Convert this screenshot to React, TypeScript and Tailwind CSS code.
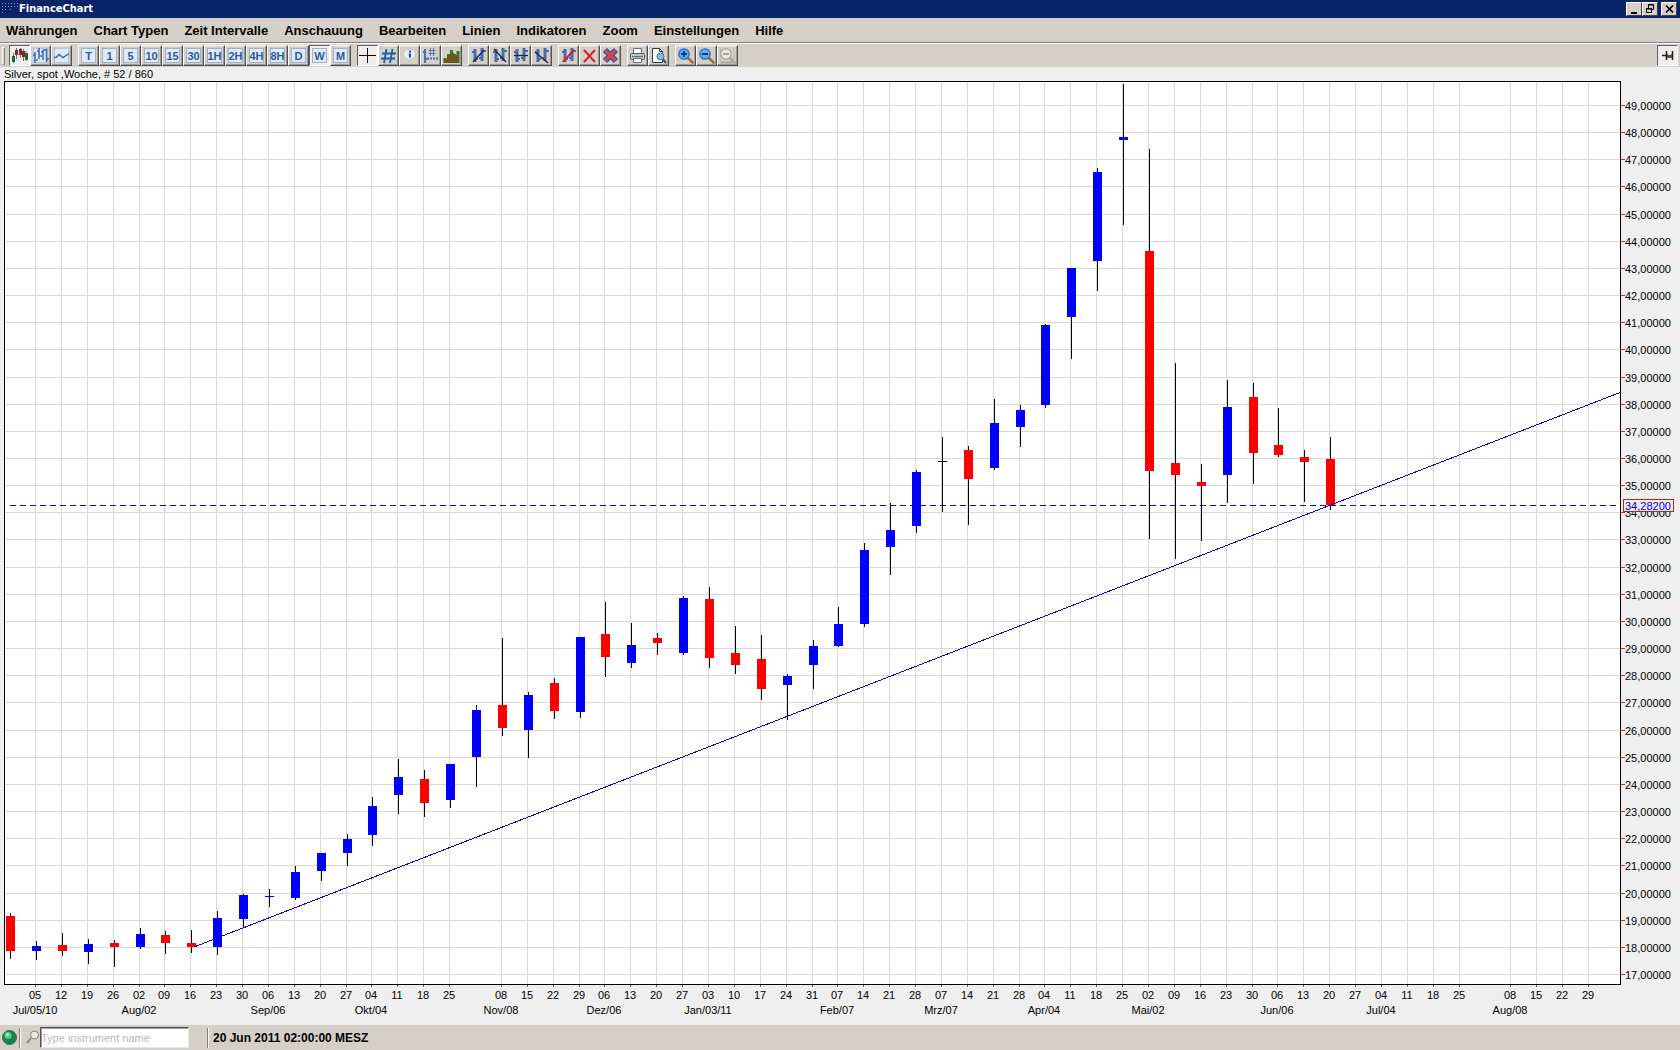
import React from 'react';

const MENUS = [
  'Währungen',
  'Chart Typen',
  'Zeit Intervalle',
  'Anschauung',
  'Bearbeiten',
  'Linien',
  'Indikatoren',
  'Zoom',
  'Einstellungen',
  'Hilfe',
];

const INTERVALS = ['T', '1', '5', '10', '15', '30', '1H', '2H', '4H', '8H', 'D', 'W', 'M'];

type Candle = [high: number, top: number, bottom: number, low: number, color: 'b' | 'r' | 'k'];

// One entry per week, values in chart units (y axis pointing down)
const CANDLES: Candle[] = [
  [913, 916, 951, 959, 'r'],
  [941, 946, 951, 960, 'b'],
  [933, 945, 951, 956, 'r'],
  [939, 944, 952, 964, 'b'],
  [940, 943, 947, 967, 'r'],
  [928, 934, 947, 949, 'b'],
  [931, 935, 943, 954, 'r'],
  [930, 943, 947, 953, 'r'],
  [911, 918, 947, 955, 'b'],
  [894, 895, 919, 928, 'b'],
  [889, 896, 897, 907, 'b'],
  [866, 872, 898, 900, 'b'],
  [853, 853, 871, 881, 'b'],
  [834, 839, 853, 866, 'b'],
  [797, 806, 835, 846, 'b'],
  [759, 777, 795, 814, 'b'],
  [770, 779, 803, 817, 'r'],
  [764, 764, 800, 808, 'b'],
  [705, 710, 757, 787, 'b'],
  [638, 705, 728, 736, 'r'],
  [692, 695, 730, 758, 'b'],
  [678, 683, 711, 719, 'r'],
  [637, 637, 712, 718, 'b'],
  [602, 634, 657, 677, 'r'],
  [623, 645, 663, 668, 'b'],
  [633, 638, 643, 655, 'r'],
  [596, 598, 653, 655, 'b'],
  [587, 599, 658, 668, 'r'],
  [626, 653, 665, 674, 'r'],
  [635, 659, 689, 700, 'r'],
  [674, 676, 685, 720, 'b'],
  [640, 646, 665, 689, 'b'],
  [607, 624, 646, 647, 'b'],
  [543, 550, 624, 627, 'b'],
  [503, 530, 547, 575, 'b'],
  [470, 472, 526, 533, 'b'],
  [437, 461, 462, 512, 'k'],
  [446, 450, 479, 525, 'r'],
  [399, 423, 468, 470, 'b'],
  [405, 410, 427, 447, 'b'],
  [324, 325, 405, 408, 'b'],
  [268, 268, 317, 359, 'b'],
  [168, 172, 261, 291, 'b'],
  [84, 137, 140, 225, 'b'],
  [149, 251, 471, 539, 'r'],
  [363, 463, 475, 559, 'r'],
  [464, 482, 486, 541, 'r'],
  [380, 407, 475, 503, 'b'],
  [383, 397, 453, 484, 'r'],
  [408, 445, 455, 457, 'r'],
  [450, 457, 462, 502, 'r'],
  [437, 459, 505, 510, 'r'],
];

const COLORS = { b: '#0000ff', r: '#ff0000', k: '#000000' };

// Empty strings are weeks without a grid line
const DAYS = [
  '05', '12', '19', '26', '02', '09', '16', '23', '30', '06', '13', '20', '27', '04', '11', '18', '25', '',
  '08', '15', '22', '29', '06', '13', '20', '27', '03', '10', '17', '24', '31', '07', '14', '21', '28',
  '07', '14', '21', '28', '04', '11', '18', '25', '02', '09', '16', '23', '30', '06', '13', '20', '27',
  '04', '11', '18', '25', '', '08', '15', '22', '29',
];

const MONTHS: Record<number, string> = {
  1: 'Jul/05/10',
  5: 'Aug/02',
  10: 'Sep/06',
  14: 'Okt/04',
  19: 'Nov/08',
  23: 'Dez/06',
  27: 'Jan/03/11',
  32: 'Feb/07',
  36: 'Mrz/07',
  40: 'Apr/04',
  44: 'Mai/02',
  49: 'Jun/06',
  53: 'Jul/04',
  58: 'Aug/08',
};

const PRICES = Array.from({ length: 33 }, (_, i) => 49 - i);

const weekX = (i: number) => Math.round(6.13 + 25.883 * i);
const priceY = (price: number) => Math.round(105 + (49 - price) * 27.156);

interface ToolButtonProps {
  label: string;
  active?: boolean;
  children: React.ReactNode;
}

const ToolButton: React.FC<ToolButtonProps> = ({ label, active, children }) => (
  <button
    title={label}
    aria-label={label}
    aria-pressed={active}
    className={
      'flex size-[21px] shrink-0 items-center justify-center border ' +
      (active
        ? 'border-t-[#606060] border-l-[#606060] border-r-white border-b-white bg-[#efeeec]'
        : 'border-t-white border-l-white border-r-[#505050] border-b-[#505050] bg-[#d4d0c8] shadow-[inset_-1px_-1px_0_#a09c94]')
    }
  >
    {children}
  </button>
);

const Icon: React.FC<{ children: React.ReactNode }> = ({ children }) => (
  <svg width="17" height="17" viewBox="0 0 17 17" fill="none">
    {children}
  </svg>
);

// Pair of blue bars shared by the line drawing tools
const Bars = () => (
  <g stroke="#4a68ac" strokeWidth="3">
    <path d="M5 2v13M12 1v13" />
    <path d="M2 5h3M5 12h3M9 11h3M12 4h4" strokeWidth="2" />
  </g>
);

const Tile = () => <rect x="1.5" y="1.5" width="14" height="14" fill="#dfebfb" stroke="#b3c6e2" />;

const Magnifier: React.FC<{ sign: string; off?: boolean }> = ({ sign, off }) => (
  <Icon>
    {off && <path d="M1.5 1v14.5H15V1" stroke="#c0bcb4" />}
    {off && <path d="M2 15.5h13" stroke="#aaa69e" strokeWidth="2" />}
    <path d="M10.5 10.5l5 5" stroke={off ? '#aaa69e' : '#a8682c'} strokeWidth="2.5" strokeLinecap="round" />
    <circle cx="7" cy="7" r="5.2" fill={off ? '#eceae6' : '#5fb0f2'} stroke={off ? '#a8a49c' : '#1f6fc0'} strokeWidth="1.3" />
    <path d={sign} stroke={off ? '#a8a49c' : '#0a3278'} strokeWidth="2" />
  </Icon>
);

const WindowButton: React.FC<{ label: string; children: React.ReactNode }> = ({ label, children }) => (
  <button
    aria-label={label}
    className="flex h-[14px] w-4 items-center justify-center border border-t-white border-l-white border-r-[#404040] border-b-[#404040] bg-[#d4d0c8]"
  >
    <svg width="13" height="12" viewBox="0 0 13 12" fill="none">
      {children}
    </svg>
  </button>
);

const TitleBar = () => (
  <header className="flex h-[18px] items-center bg-[#0a246a] pr-[3px] pl-[2px]">
    <svg width="16" height="16" viewBox="0 0 16 16" stroke="#8295c4" strokeDasharray="1 2">
      <path d="M0 2.5h16M0 5.5h16M0 8.5h5M8 8.5h3M0 11.5h2" />
    </svg>
    <h1 className="ml-px flex-1 font-['DejaVu_Sans_Condensed','DejaVu_Sans',sans-serif] text-[11px] font-bold text-white">
      FinanceChart
    </h1>
    <div className="flex">
      <WindowButton label="Minimieren">
        <path d="M3 9h6v2H3z" fill="#000" />
      </WindowButton>
      <WindowButton label="Wiederherstellen">
        <path d="M4.5 5V1.5h5v5H8M4 2h6M2.5 5.5h5v4h-5zM2 6h6" stroke="#000" />
      </WindowButton>
      <div className="w-[3px]" />
      <WindowButton label="Schließen">
        <path d="M3 2.5l7 7M10 2.5l-7 7" stroke="#000" strokeWidth="1.7" />
      </WindowButton>
    </div>
  </header>
);

const MenuBar = () => (
  <nav className="flex h-[25px] items-center gap-4 border-b border-[#808080] pt-[2px] pl-[6px]">
    {MENUS.map((menu) => (
      <button key={menu} className="text-[13px] leading-4 font-bold whitespace-nowrap">
        {menu}
      </button>
    ))}
  </nav>
);

const Toolbar = () => (
  <div className="flex h-6 items-start gap-[6px] border-t border-white pt-px pr-[2px] pl-[2px]">
    <div className="-mr-[2px] h-[18px] w-[3px] self-center border border-t-white border-l-white border-r-[#808080] border-b-[#808080]" />
    <div className="flex">
      <ToolButton label="Kerzen" active>
        <Icon>
          <path d="M2.5 6v10M5.5 1v11M9.5 1v10M12.5 2v12M15 4v10" stroke="#6c7480" />
          <path d="M1 9h3v6H1zM14 6h3v7h-3z" fill="#1c6a2c" />
          <path d="M4 3h3v5H4zM8 2h3v6H8zM11 4h3v6h-3z" fill="#8c2430" />
        </Icon>
      </ToolButton>
      <ToolButton label="Balken">
        <Icon>
          <Tile />
          <path
            d="M3 5v11M1 8h2M3 13h3M7 1v11M5 4h2M7 9h3M11 3v10M9 5h2M11 3h3M14.5 2v13M14 12h3"
            stroke="#3c68b0"
            strokeWidth="1.5"
          />
        </Icon>
      </ToolButton>
      <ToolButton label="Linie">
        <Icon>
          <Tile />
          <path d="M1 10.5h2l3-3 4 3 6-4" stroke="#456a9c" strokeWidth="1.5" />
        </Icon>
      </ToolButton>
    </div>

    <div className="flex">
      {INTERVALS.map((interval) => (
        <ToolButton key={interval} label={`Intervall ${interval}`} active={interval === 'W'}>
          <span className="flex size-[15px] items-center justify-center border border-[#9db2d0] bg-[#dfebfb] text-[11px] leading-3 font-black text-[#34598c]">
            {interval}
          </span>
        </ToolButton>
      ))}
    </div>

    <div className="flex">
      <ToolButton label="Fadenkreuz" active>
        <Icon>
          <path d="M0 8.5h17M8.5 1v15" stroke="#000" />
        </Icon>
      </ToolButton>
      <ToolButton label="Gitter">
        <Icon>
          <path d="M6.5 2L4 16M12.5 2L10 16M2 6.5h14M1 11.5h14" stroke="#1560a8" strokeWidth="1.8" />
        </Icon>
      </ToolButton>
      <ToolButton label="Information">
        <Icon>
          <path d="M8.5 2c4 0 6 2 6 5s-2 5-5 5l-1 3-1-3c-3 0-5-2-5-5s2-5 6-5z" fill="#f0f0f4" stroke="#c4c4c8" />
          <path d="M8 3.5h2v2H8zM7.5 6.5H10v4H8v-3h-.5z" fill="#2438d8" />
        </Icon>
      </ToolButton>
      <ToolButton label="Raster">
        <Icon>
          <path d="M3 2v14M1 5h2M3 12h3" stroke="#4a70b4" strokeWidth="2" />
          <path d="M8.5 1v8M11.5 1v8M6.5 3.5h7M6.5 6.5h7" stroke="#5878b4" />
          <path d="M5 11.5h12" stroke="#4a70b4" strokeWidth="2" strokeDasharray="2 1" />
        </Icon>
      </ToolButton>
      <ToolButton label="Volumen">
        <Icon>
          <path d="M2 16v-5M5.5 16V7M8.5 16V3M11.5 16V7M15 16V4" stroke="#2c7a20" strokeWidth="3" />
          <path d="M3.5 16v-4M6.5 16V9M10 16V6M13.5 16V8" stroke="#a03c1c" strokeWidth="2" />
        </Icon>
      </ToolButton>
    </div>

    <div className="flex">
      <ToolButton label="Trendlinie">
        <Icon>
          <Bars />
          <path d="M3 15L14 3" stroke="#182440" strokeWidth="1.3" />
        </Icon>
      </ToolButton>
      <ToolButton label="Abwärtslinie">
        <Icon>
          <Bars />
          <path d="M3 2l12 13" stroke="#182440" strokeWidth="1.3" />
        </Icon>
      </ToolButton>
      <ToolButton label="Horizontale Linie">
        <Icon>
          <Bars />
          <path d="M2 8.5h14" stroke="#182440" strokeWidth="1.3" />
        </Icon>
      </ToolButton>
      <ToolButton label="Parallele Linie">
        <Icon>
          <Bars />
          <path d="M2 5l13 11" stroke="#182440" strokeWidth="1.3" />
        </Icon>
      </ToolButton>
    </div>

    <div className="flex">
      <ToolButton label="Linie löschen">
        <Icon>
          <Bars />
          <path d="M3 15L14 3" stroke="#d02038" strokeWidth="2" />
        </Icon>
      </ToolButton>
      <ToolButton label="Löschen">
        <Icon>
          <path d="M3 3l11 12M14 3L3 15" stroke="#d81c34" strokeWidth="2" />
        </Icon>
      </ToolButton>
      <ToolButton label="Alle löschen">
        <Icon>
          <path d="M3 3l11 11M14 3L3 14" stroke="#34589c" strokeWidth="6" />
          <path d="M3.5 3.5l10 10M13.5 3.5l-10 10" stroke="#e0404c" strokeWidth="3" />
        </Icon>
      </ToolButton>
    </div>

    <div className="flex">
      <ToolButton label="Drucken">
        <Icon>
          <path d="M4.5 7V1.5h8V7" fill="#fff" stroke="#607080" />
          <rect x="1.5" y="6.5" width="14" height="6" rx="1" fill="#b9c4c4" stroke="#4c5c68" />
          <path d="M4.5 11.5h8v4h-8z" fill="#fff" stroke="#607080" />
          <path d="M3 9.5h11" stroke="#5f7474" />
        </Icon>
      </ToolButton>
      <ToolButton label="Seitenansicht">
        <Icon>
          <path d="M2.5 1.5h7l3 3v11h-10z" fill="#fff" stroke="#303840" />
          <path d="M9.5 1.5v3h3" stroke="#303840" />
          <path d="M12.5 12l3.5 4" stroke="#444e5c" strokeWidth="2" />
          <circle cx="10.5" cy="9.5" r="3.5" fill="#7fc0ee" stroke="#456c98" />
        </Icon>
      </ToolButton>
    </div>

    <div className="flex">
      <ToolButton label="Vergrößern">
        <Magnifier sign="M4 7h6M7 4v6" />
      </ToolButton>
      <ToolButton label="Verkleinern">
        <Magnifier sign="M4 7h6" />
      </ToolButton>
      <ToolButton label="Zoom zurücksetzen">
        <Magnifier sign="M4 7h6" off />
      </ToolButton>
    </div>

    <div className="ml-auto">
      <ToolButton label="Anheften" active>
        <Icon>
          <path d="M3 8.5h4M7.5 4v9M13.5 4v9" stroke="#202020" strokeWidth="1.5" />
          <path d="M8 7h5v4H8z" fill="#505050" />
          <path d="M9 7.5h3" stroke="#e0e0e0" />
        </Icon>
      </ToolButton>
    </div>
  </div>
);

const Chart = () => (
  <svg viewBox="0 80 1680 945" className="block h-auto w-full text-[11px]" role="img" aria-label="Silver, spot, Woche">
    <g shapeRendering="crispEdges">
      <rect x="4.5" y="81.5" width="1616" height="903" fill="#fff" />
      <g stroke="#d8d8d8">
        {PRICES.map((price) => (
          <line key={price} x1="5" x2="1620" y1={priceY(price) + 0.5} y2={priceY(price) + 0.5} />
        ))}
        {DAYS.map((day, i) => day && <line key={i} x1={weekX(i + 1) + 3.5} x2={weekX(i + 1) + 3.5} y1="82" y2="984" />)}
      </g>
      <rect x="4.5" y="81.5" width="1616" height="903" fill="none" stroke="#000" />
      <g stroke="#c03030">
        {PRICES.map((price) => (
          <line key={price} x1="1621" x2="1625" y1={priceY(price) + 0.5} y2={priceY(price) + 0.5} />
        ))}
        {DAYS.map((day, i) => day && <line key={i} x1={weekX(i + 1) + 3.5} x2={weekX(i + 1) + 3.5} y1="985" y2="987" />)}
      </g>

      {CANDLES.map(([high, top, bottom, low, color], i) => (
        <g key={i}>
          <rect x={weekX(i) + 4} y={high} width="1" height={low - high} fill="#000" />
          <rect x={weekX(i)} y={top} width="9" height={bottom - top} fill={COLORS[color]} />
        </g>
      ))}

      <line x1="10" x2="1617" y1="505.5" y2="505.5" stroke="#1008b0" strokeDasharray="6 4" />
      <line x1="194" y1="947" x2="1620" y2="392.5" stroke="#1004b4" />
    </g>

    {PRICES.map((price) => (
      <text key={price} x="1625" y={priceY(price) + 5}>
        {price},00000
      </text>
    ))}
    <g textAnchor="middle">
      {DAYS.map((day, i) => (
        <text key={i} x={weekX(i + 1) + 3} y="999">
          {day}
        </text>
      ))}
      {Object.entries(MONTHS).map(([i, month]) => (
        <text key={i} x={weekX(Number(i)) + 3} y="1014">
          {month}
        </text>
      ))}
    </g>

    {/* Last price */}
    <rect x="1623.5" y="499.5" width="50" height="12" fill="#efefef" stroke="#d01818" shapeRendering="crispEdges" />
    <text x="1625" y="510" fill="#0000d8">
      34,28200
    </text>
  </svg>
);

const StatusBar = () => (
  <footer className="flex h-[25px] items-center bg-[#d4d0c8] pl-[2px]">
    <svg width="15" height="15" viewBox="0 0 15 15">
      <circle cx="7.5" cy="7.5" r="7" fill="#14884c" stroke="#3c6c50" />
      <circle cx="6" cy="5.5" r="3.5" fill="#5cc890" />
      <circle cx="5.5" cy="4.5" r="1.5" fill="#a4e8c4" />
    </svg>
    <div className="ml-[2px] h-5 w-[2px] border-r border-l border-r-white border-l-[#808080]" />
    <label htmlFor="instrument" className="ml-[5px]" aria-label="Instrument">
      <svg width="14" height="15" viewBox="0 0 14 15" fill="none">
        <path d="M5 8l-4 5" stroke="#808080" strokeWidth="2" />
        <circle cx="8.5" cy="5" r="4" fill="#eceae6" stroke="#808080" />
      </svg>
    </label>
    <input
      id="instrument"
      type="text"
      placeholder="Type instrument name"
      className="h-[21px] w-[149px] border border-t-[#505050] border-l-[#505050] border-r-[#e8e6e0] border-b-[#e8e6e0] bg-white text-[11px] shadow-[inset_1px_1px_0_#a0a0a0] placeholder:text-[#b8b8b8]"
    />
    <div className="ml-[18px] h-5 w-[2px] border-r border-l border-r-white border-l-[#808080]" />
    <time className="ml-1 pt-px text-[12px] font-bold">20 Jun 2011 02:00:00 MESZ</time>
  </footer>
);

export default function App() {
  return (
    <div className="flex min-h-screen flex-col bg-[#efefef] font-['Liberation_Sans',Arial,sans-serif] text-black">
      <TitleBar />
      <div className="bg-[#d4d0c8]">
        <MenuBar />
        <Toolbar />
      </div>
      <main className="flex-1">
        <p className="h-[13px] pl-1 text-[11px] leading-[14px]">Silver, spot ,Woche, # 52 / 860</p>
        <Chart />
      </main>
      <StatusBar />
    </div>
  );
}
